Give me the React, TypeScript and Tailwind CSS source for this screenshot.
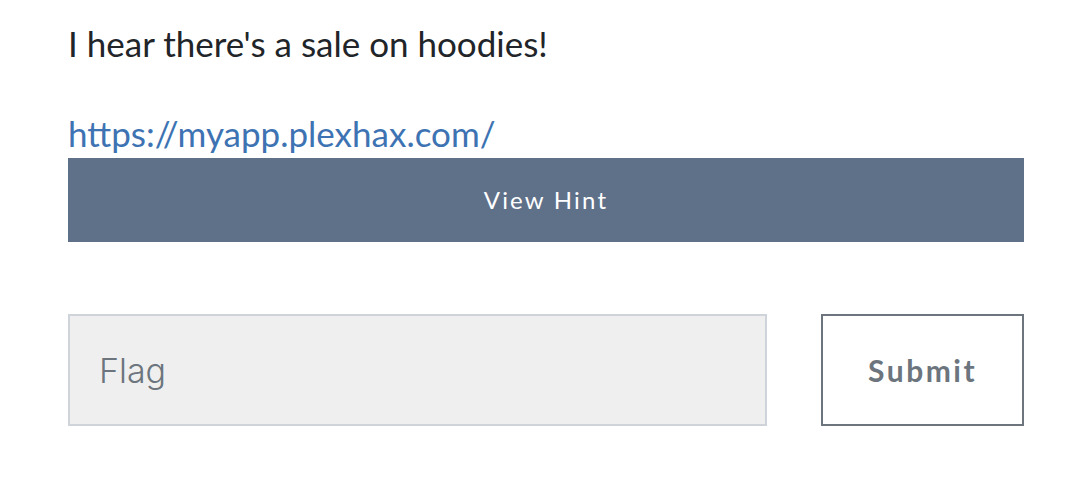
import React, { useState } from "react";

const lato = { fontFamily: "Lato, 'Liberation Sans', sans-serif" };

export default function App() {
  const [flag, setFlag] = useState("");
  const [showHint, setShowHint] = useState(false);

  return (
    <div className="min-h-[504px] w-full bg-white" style={lato}>
      <div className="ml-[68px] w-[956px] pt-[17px]">
        {/* description */}
        <p className="text-[35px] leading-[52px] text-[#212529]">
          I hear there's a sale on hoodies!
        </p>
        <p className="mt-[44px] text-[35px] leading-[40px]">
          <a
            href="#"
            className="text-[#3e73b3] no-underline"
            onClick={(e) => e.preventDefault()}
          >
            https://myapp.plexhax.com/
          </a>
        </p>

        {/* hint */}
        <button
          type="button"
          onClick={() => setShowHint(!showHint)}
          className="mt-[5px] flex h-[84px] w-full items-center justify-center bg-[#5f7089] text-[24px] tracking-[2.2px] text-white"
        >
          View Hint
        </button>

        {/* flag submit */}
        <div className="mt-[72px] flex items-stretch gap-[54px]">
          <input
            type="text"
            value={flag}
            onChange={(e) => setFlag(e.target.value)}
            placeholder="Flag"
            style={{ fontFamily: "Inter, 'Liberation Sans', sans-serif" }}
            className="h-[112px] w-[700px] border-2 border-[#ced4da] bg-[#efefef] px-[29px] text-[34px] font-light text-[#495057] outline-none placeholder:text-[#6c757d]"
          />
          <button
            type="button"
            className="h-[112px] w-[203px] border-2 border-[#6c757d] bg-white text-[30px] font-bold tracking-[2.5px] text-[#6c757d]"
          >
            Submit
          </button>
        </div>
      </div>
    </div>
  );
}
